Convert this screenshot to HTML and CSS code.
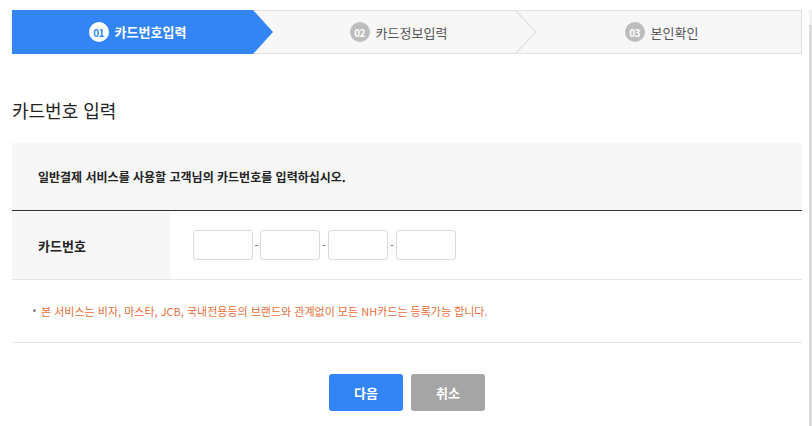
FILE: index.html
```html
<!DOCTYPE html>
<html lang="ko">
<head>
<meta charset="utf-8">
<title>카드번호입력</title>
<link rel="stylesheet" href="styles.css">
</head>
<body>
<div class="page">
  <main class="main">
    <ol class="steps">
      <li class="step on"><span class="num">01</span><span class="label">카드번호입력</span></li>
      <li class="step sep"><span class="num">02</span><span class="label">카드정보입력</span></li>
      <li class="step last"><span class="num">03</span><span class="label">본인확인</span></li>
    </ol>

    <h2 class="title">카드번호 입력</h2>

    <div class="info">일반결제 서비스를 사용할 고객님의 카드번호를 입력하십시오.</div>

    <div class="row">
      <div class="row-label">카드번호</div>
      <div class="row-field">
        <input class="cnum" type="text">
        <span class="dash">-</span>
        <input class="cnum" type="text">
        <span class="dash wide">-</span>
        <input class="cnum" type="text">
        <span class="dash wide">-</span>
        <input class="cnum" type="text">
      </div>
    </div>

    <div class="note"><span class="dot"></span>본 서비스는 비자, 마스타, JCB, 국내전용등의 브랜드와 관계없이 모든 NH카드는 등록가능 합니다.</div>

    <div class="buttons">
      <button class="btn primary" type="button">다음</button>
      <button class="btn gray" type="button">취소</button>
    </div>
  </main>
  <div class="edge"></div>
</div>
</body>
</html>
```

FILE: styles.css
```css
* { box-sizing: border-box; }
html, body { margin: 0; padding: 0; background: #fff; }
body {
  font-family: "Noto Sans CJK KR", "Noto Sans", sans-serif;
  color: #222;
}
.page {
  display: flex;
  width: 812px;
  height: 426px;
  overflow: hidden;
}
.main {
  width: 790px;
  margin-left: 12px;
}
.edge {
  width: 3px;
  margin-left: 7px;
  margin-top: 10px;
  background: linear-gradient(#f2f2f2 0, #f2f2f2 15px, #dcdcdc 15px);
}

/* steps */
.steps {
  list-style: none;
  margin: 10px 0 0;
  padding: 0;
  display: flex;
  height: 44px;
  background: #f7f7f7;
  border: 1px solid #e0e0e0;
}
.step {
  flex: 1;
  display: flex;
  align-items: center;
  justify-content: center;
  gap: 6px;
  position: relative;
  font-size: 13px;
  color: #555;
  padding-right: 12px;
}
.step.last { padding-right: 14px; }
.step.on {
  margin: -1px 0 -1px -1px;
  padding-right: 10px;
  background: #3385f6;
  color: #fff;
  font-weight: bold;
  clip-path: polygon(0 0, calc(100% - 20px) 0, 100% 50%, calc(100% - 20px) 100%, 0 100%);
}
.step.sep::after {
  content: "";
  position: absolute;
  right: 0;
  top: 0;
  width: 20px;
  height: 42px;
  background: linear-gradient(to top right, transparent calc(50% - 1px), #dcdcdc 50%, transparent calc(50% + 1px)) 0 0 / 20px 21px no-repeat,
              linear-gradient(to bottom right, transparent calc(50% - 1px), #dcdcdc 50%, transparent calc(50% + 1px)) 0 21px / 20px 21px no-repeat;
}
.num {
  width: 20px;
  height: 20px;
  border-radius: 50%;
  background: #bdbdbd;
  color: #fff;
  font-size: 10px;
  font-weight: bold;
  display: flex;
  align-items: center;
  justify-content: center;
  letter-spacing: -0.5px;
}
.step.on .num {
  background: #fff;
  color: #3385f6;
}
.step.on .label { margin-top: -1px; }

/* title */
.title {
  margin: 44px 0 0;
  font-size: 18px;
  line-height: 24px;
  font-weight: normal;
  color: #222;
}

/* info */
.info {
  margin-top: 21px;
  height: 68px;
  background: #f7f7f7;
  border-bottom: 1px solid #333;
  padding-left: 26px;
  display: flex;
  align-items: center;
  font-size: 12px;
  font-weight: bold;
  color: #222;
}

/* row */
.row {
  display: flex;
  height: 69px;
  border-bottom: 1px solid #e5e5e5;
}
.row-label {
  width: 158px;
  background: #f7f7f7;
  display: flex;
  align-items: center;
  padding-left: 26px;
  font-size: 13px;
  font-weight: bold;
  color: #222;
}
.row-field {
  display: flex;
  align-items: center;
  padding-left: 23px;
}
.cnum {
  width: 60px;
  height: 30px;
  border: 1px solid #dcdcdc;
  border-radius: 3px;
  margin: 0;
  padding: 0 4px;
  background: #fff;
  font-family: inherit;
}
.dash {
  width: 7px;
  text-align: center;
  font-size: 11px;
  color: #666;
}
.dash.wide { width: 8px; }

/* note */
.note {
  height: 63px;
  border-bottom: 1px solid #e5e5e5;
  display: flex;
  align-items: center;
  padding-left: 21px;
  padding-bottom: 1px;
  font-size: 11px;
  color: #e8703a;
}
.dot {
  width: 3px;
  height: 3px;
  background: #888;
  border-radius: 50%;
  margin-right: 5px;
}

/* buttons */
.buttons {
  display: flex;
  justify-content: center;
  gap: 8px;
  margin-top: 31px;
}
.btn {
  width: 74px;
  height: 37px;
  border: 0;
  border-radius: 3px;
  color: #fff;
  font-family: inherit;
  font-size: 13px;
  font-weight: bold;
  cursor: pointer;
}
.btn.primary { background: #3385f6; }
.btn.gray { background: #a5a5a5; }
```
